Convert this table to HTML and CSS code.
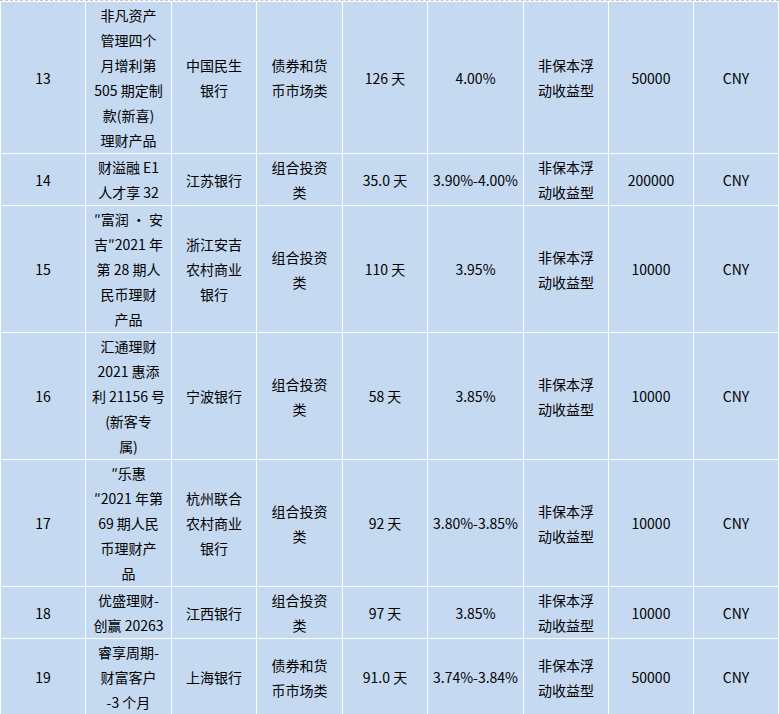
FILE: index.html
```html
<!DOCTYPE html>
<html lang="zh-CN">
<head>
<meta charset="utf-8">
<title>理财产品</title>
<link rel="stylesheet" href="styles.css">
</head>
<body>
<div class="top-rule"></div>
<table class="grid">
  <colgroup>
    <col class="c-no"><col class="c-name"><col class="c-bank"><col class="c-type"><col class="c-term"><col class="c-rate"><col class="c-kind"><col class="c-min"><col class="c-cur">
  </colgroup>
  <tbody>
    <tr>
      <td>13</td>
      <td>非凡资产<br>管理四个<br>月增利第<br>505 期定制<br>款(新喜)<br>理财产品</td>
      <td>中国民生<br>银行</td>
      <td>债券和货<br>币市场类</td>
      <td>126 天</td>
      <td>4.00%</td>
      <td>非保本浮<br>动收益型</td>
      <td>50000</td>
      <td>CNY</td>
    </tr>
    <tr>
      <td>14</td>
      <td>财溢融 E1<br>人才享 32</td>
      <td>江苏银行</td>
      <td>组合投资<br>类</td>
      <td>35.0 天</td>
      <td>3.90%-4.00%</td>
      <td>非保本浮<br>动收益型</td>
      <td>200000</td>
      <td>CNY</td>
    </tr>
    <tr>
      <td>15</td>
      <td>″富润 · 安<br>吉″2021 年<br>第 28 期人<br>民币理财<br>产品</td>
      <td>浙江安吉<br>农村商业<br>银行</td>
      <td>组合投资<br>类</td>
      <td>110 天</td>
      <td>3.95%</td>
      <td>非保本浮<br>动收益型</td>
      <td>10000</td>
      <td>CNY</td>
    </tr>
    <tr>
      <td>16</td>
      <td>汇通理财<br>2021 惠添<br>利 21156 号<br>(新客专<br>属)</td>
      <td>宁波银行</td>
      <td>组合投资<br>类</td>
      <td>58 天</td>
      <td>3.85%</td>
      <td>非保本浮<br>动收益型</td>
      <td>10000</td>
      <td>CNY</td>
    </tr>
    <tr>
      <td>17</td>
      <td>″乐惠<br>″2021 年第<br>69 期人民<br>币理财产<br>品</td>
      <td>杭州联合<br>农村商业<br>银行</td>
      <td>组合投资<br>类</td>
      <td>92 天</td>
      <td>3.80%-3.85%</td>
      <td>非保本浮<br>动收益型</td>
      <td>10000</td>
      <td>CNY</td>
    </tr>
    <tr>
      <td>18</td>
      <td>优盛理财-<br>创赢 20263</td>
      <td>江西银行</td>
      <td>组合投资<br>类</td>
      <td>97 天</td>
      <td>3.85%</td>
      <td>非保本浮<br>动收益型</td>
      <td>10000</td>
      <td>CNY</td>
    </tr>
    <tr>
      <td>19</td>
      <td>睿享周期-<br>财富客户<br>-3 个月</td>
      <td>上海银行</td>
      <td>债券和货<br>币市场类</td>
      <td>91.0 天</td>
      <td>3.74%-3.84%</td>
      <td>非保本浮<br>动收益型</td>
      <td>50000</td>
      <td>CNY</td>
    </tr>
  </tbody>
</table>
</body>
</html>
```
FILE: styles.css
```css
html, body {
  margin: 0;
  padding: 0;
  background: #ffffff;
}

body {
  font-family: "Noto Sans CJK SC", "Noto Sans", sans-serif;
  font-size: 14px;
  color: #000000;
}

.top-rule {
  width: 779px;
  height: 0;
  border-top: 1px dashed #c4c4c4;
}

.grid {
  width: 779px;
  table-layout: fixed;
  border-collapse: collapse;
}

.grid td {
  background: #c5d9f1;
  border: 1px solid #ffffff;
  padding: 1px 2px 0;
  text-align: center;
  vertical-align: middle;
  line-height: 25px;
  font-size: 14px;
  white-space: nowrap;
  overflow: hidden;
}

.c-no { width: 85px; }
.c-name { width: 86px; }
.c-bank { width: 85px; }
.c-type { width: 86px; }
.c-term { width: 85px; }
.c-rate { width: 96px; }
.c-kind { width: 85px; }
.c-min { width: 85px; }
.c-cur { width: 85px; }
```
